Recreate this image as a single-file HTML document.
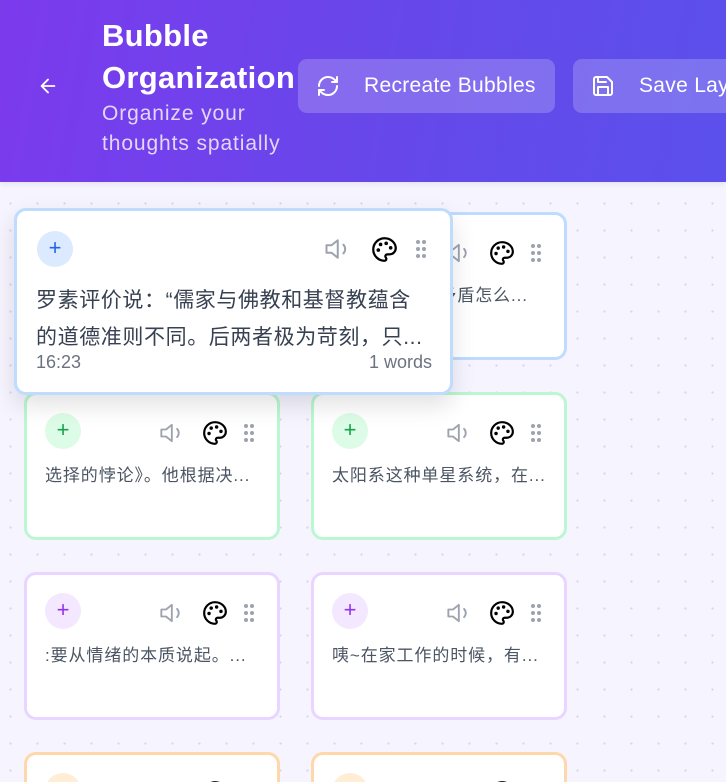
<!DOCTYPE html>
<html><head><meta charset="utf-8"><style>
*{box-sizing:border-box;margin:0;padding:0}
html,body{width:726px;height:782px;overflow:hidden}
body{font-family:"Liberation Sans","Noto Sans CJK SC",sans-serif;background:#f5f3ff;position:relative}
.bg{position:absolute;left:0;top:182px;width:726px;height:600px;background-color:#f6f4fe;background-image:radial-gradient(circle,#d9d3ee 1px,transparent 1.3px);background-size:27px 27px;background-position:-3px 8px}
header{position:absolute;left:0;top:0;width:726px;height:182px;background:linear-gradient(100deg,#7c3aed 0%,#6648ea 55%,#5b50ec 100%);color:#fff;box-shadow:0 2px 6px rgba(0,0,0,.08)}
.title{position:absolute;left:102px;top:15px;font-size:31px;font-weight:bold;line-height:42px;letter-spacing:.3px}
.sub{position:absolute;left:102px;top:99px;font-size:21px;line-height:30px;color:#e3d6fc;letter-spacing:.9px}
.btn{position:absolute;top:59px;height:54px;background:rgba(255,255,255,.2);border-radius:9px;font-size:21px;line-height:54px;color:#fff;letter-spacing:.3px}
.card{position:absolute;background:#fff;border:3px solid;border-radius:12px;width:256px;height:148px}
.plus{position:absolute;width:36px;height:36px;border-radius:50%;text-align:center;line-height:34px;font-size:22px}
.ic{position:absolute}
.txt{position:absolute;left:18px;top:66px;font-size:17px;letter-spacing:.9px;color:#4b5563;white-space:nowrap;width:225px;overflow:hidden}
.big{left:14px;top:208px;width:439px;height:187px;border-color:#bfdbfe;box-shadow:0 10px 24px rgba(0,0,0,.12);z-index:5}
</style></head><body>
<div class="bg"></div>
<header>
<svg style="position:absolute;left:37px;top:75px" width="22" height="22" viewBox="0 0 24 24" fill="none" stroke="#fff" stroke-width="2" stroke-linecap="round" stroke-linejoin="round"><path d="M19 12H5M12 19l-7-7 7-7"/></svg>
<div class="title">Bubble<br>Organization</div>
<div class="sub">Organize your<br>thoughts spatially</div>
<div class="btn" style="left:298px;width:257px"><svg style="position:absolute;left:18px;top:15px" width="24" height="24" viewBox="0 0 24 24" fill="none" stroke="#fff" stroke-width="2" stroke-linecap="round" stroke-linejoin="round"><path d="M3 12a9 9 0 0 1 9-9 9.75 9.75 0 0 1 6.74 2.74L21 8"/><path d="M21 3v5h-5"/><path d="M21 12a9 9 0 0 1-9 9 9.75 9.75 0 0 1-6.74-2.74L3 16"/><path d="M8 16H3v5"/></svg><span style="position:absolute;left:66px">Recreate Bubbles</span></div>
<div class="btn" style="left:573px;width:200px"><svg style="position:absolute;left:18px;top:15px" width="24" height="24" viewBox="0 0 24 24" fill="none" stroke="#fff" stroke-width="2" stroke-linecap="round" stroke-linejoin="round"><path d="M19 21H5a2 2 0 0 1-2-2V5a2 2 0 0 1 2-2h11l5 5v11a2 2 0 0 1-2 2z"/><path d="M17 21v-8H7v8M7 3v5h8"/></svg><span style="position:absolute;left:66px;white-space:nowrap">Save Layout</span></div>
</header>

<div class="card" style="left:311px;top:212px;border-color:#bfdbfe">
<div class="plus" style="left:18px;top:18px;background:#dbeafe;color:#2563eb">+</div>
<svg class="ic" style="left:132px;top:24px" width="28" height="28" viewBox="0 0 24 24" fill="none" stroke="#9ca3af" stroke-width="1.6" stroke-linecap="round" stroke-linejoin="round"><path d="M11 5 6 9H2v6h4l5 4V5z"/><path d="M15.5 8.5a5 5 0 0 1 0 7"/></svg>
<svg class="ic" style="left:175px;top:25px" width="26" height="26" viewBox="0 0 24 24" fill="none" stroke="#000" stroke-width="2" stroke-linecap="round" stroke-linejoin="round"><circle cx="13.5" cy="6.5" r=".6" fill="#000"/><circle cx="17.5" cy="10.5" r=".6" fill="#000"/><circle cx="8.5" cy="7.5" r=".6" fill="#000"/><circle cx="6.5" cy="12.5" r=".6" fill="#000"/><path d="M12 2C6.5 2 2 6.5 2 12s4.5 10 10 10c.93 0 1.65-.75 1.65-1.69 0-.44-.18-.84-.44-1.13-.29-.29-.44-.65-.44-1.13a1.64 1.64 0 0 1 1.67-1.67h2c3.05 0 5.56-2.5 5.56-5.55C21.97 6.01 17.46 2 12 2z"/></svg>
<svg class="ic" style="left:215px;top:28px" width="14" height="20" viewBox="0 0 14 20" fill="#9ca3af"><circle cx="4" cy="3" r="2"/><circle cx="10" cy="3" r="2"/><circle cx="4" cy="10" r="2"/><circle cx="10" cy="10" r="2"/><circle cx="4" cy="17" r="2"/><circle cx="10" cy="17" r="2"/></svg>
<div class="txt">社会中普遍的矛盾怎么...</div></div>

<div class="card" style="left:24px;top:392px;border-color:#bbf7d0">
<div class="plus" style="left:18px;top:18px;background:#dcfce7;color:#16a34a">+</div>
<svg class="ic" style="left:132px;top:24px" width="28" height="28" viewBox="0 0 24 24" fill="none" stroke="#9ca3af" stroke-width="1.6" stroke-linecap="round" stroke-linejoin="round"><path d="M11 5 6 9H2v6h4l5 4V5z"/><path d="M15.5 8.5a5 5 0 0 1 0 7"/></svg>
<svg class="ic" style="left:175px;top:25px" width="26" height="26" viewBox="0 0 24 24" fill="none" stroke="#000" stroke-width="2" stroke-linecap="round" stroke-linejoin="round"><circle cx="13.5" cy="6.5" r=".6" fill="#000"/><circle cx="17.5" cy="10.5" r=".6" fill="#000"/><circle cx="8.5" cy="7.5" r=".6" fill="#000"/><circle cx="6.5" cy="12.5" r=".6" fill="#000"/><path d="M12 2C6.5 2 2 6.5 2 12s4.5 10 10 10c.93 0 1.65-.75 1.65-1.69 0-.44-.18-.84-.44-1.13-.29-.29-.44-.65-.44-1.13a1.64 1.64 0 0 1 1.67-1.67h2c3.05 0 5.56-2.5 5.56-5.55C21.97 6.01 17.46 2 12 2z"/></svg>
<svg class="ic" style="left:215px;top:28px" width="14" height="20" viewBox="0 0 14 20" fill="#9ca3af"><circle cx="4" cy="3" r="2"/><circle cx="10" cy="3" r="2"/><circle cx="4" cy="10" r="2"/><circle cx="10" cy="10" r="2"/><circle cx="4" cy="17" r="2"/><circle cx="10" cy="17" r="2"/></svg>
<div class="txt">选择的悖论》。他根据决...</div></div>

<div class="card" style="left:311px;top:392px;border-color:#bbf7d0">
<div class="plus" style="left:18px;top:18px;background:#dcfce7;color:#16a34a">+</div>
<svg class="ic" style="left:132px;top:24px" width="28" height="28" viewBox="0 0 24 24" fill="none" stroke="#9ca3af" stroke-width="1.6" stroke-linecap="round" stroke-linejoin="round"><path d="M11 5 6 9H2v6h4l5 4V5z"/><path d="M15.5 8.5a5 5 0 0 1 0 7"/></svg>
<svg class="ic" style="left:175px;top:25px" width="26" height="26" viewBox="0 0 24 24" fill="none" stroke="#000" stroke-width="2" stroke-linecap="round" stroke-linejoin="round"><circle cx="13.5" cy="6.5" r=".6" fill="#000"/><circle cx="17.5" cy="10.5" r=".6" fill="#000"/><circle cx="8.5" cy="7.5" r=".6" fill="#000"/><circle cx="6.5" cy="12.5" r=".6" fill="#000"/><path d="M12 2C6.5 2 2 6.5 2 12s4.5 10 10 10c.93 0 1.65-.75 1.65-1.69 0-.44-.18-.84-.44-1.13-.29-.29-.44-.65-.44-1.13a1.64 1.64 0 0 1 1.67-1.67h2c3.05 0 5.56-2.5 5.56-5.55C21.97 6.01 17.46 2 12 2z"/></svg>
<svg class="ic" style="left:215px;top:28px" width="14" height="20" viewBox="0 0 14 20" fill="#9ca3af"><circle cx="4" cy="3" r="2"/><circle cx="10" cy="3" r="2"/><circle cx="4" cy="10" r="2"/><circle cx="10" cy="10" r="2"/><circle cx="4" cy="17" r="2"/><circle cx="10" cy="17" r="2"/></svg>
<div class="txt">太阳系这种单星系统，在...</div></div>

<div class="card" style="left:24px;top:572px;border-color:#e9d5ff">
<div class="plus" style="left:18px;top:18px;background:#f3e8ff;color:#9333ea">+</div>
<svg class="ic" style="left:132px;top:24px" width="28" height="28" viewBox="0 0 24 24" fill="none" stroke="#9ca3af" stroke-width="1.6" stroke-linecap="round" stroke-linejoin="round"><path d="M11 5 6 9H2v6h4l5 4V5z"/><path d="M15.5 8.5a5 5 0 0 1 0 7"/></svg>
<svg class="ic" style="left:175px;top:25px" width="26" height="26" viewBox="0 0 24 24" fill="none" stroke="#000" stroke-width="2" stroke-linecap="round" stroke-linejoin="round"><circle cx="13.5" cy="6.5" r=".6" fill="#000"/><circle cx="17.5" cy="10.5" r=".6" fill="#000"/><circle cx="8.5" cy="7.5" r=".6" fill="#000"/><circle cx="6.5" cy="12.5" r=".6" fill="#000"/><path d="M12 2C6.5 2 2 6.5 2 12s4.5 10 10 10c.93 0 1.65-.75 1.65-1.69 0-.44-.18-.84-.44-1.13-.29-.29-.44-.65-.44-1.13a1.64 1.64 0 0 1 1.67-1.67h2c3.05 0 5.56-2.5 5.56-5.55C21.97 6.01 17.46 2 12 2z"/></svg>
<svg class="ic" style="left:215px;top:28px" width="14" height="20" viewBox="0 0 14 20" fill="#9ca3af"><circle cx="4" cy="3" r="2"/><circle cx="10" cy="3" r="2"/><circle cx="4" cy="10" r="2"/><circle cx="10" cy="10" r="2"/><circle cx="4" cy="17" r="2"/><circle cx="10" cy="17" r="2"/></svg>
<div class="txt">:要从情绪的本质说起。...</div></div>

<div class="card" style="left:311px;top:572px;border-color:#e9d5ff">
<div class="plus" style="left:18px;top:18px;background:#f3e8ff;color:#9333ea">+</div>
<svg class="ic" style="left:132px;top:24px" width="28" height="28" viewBox="0 0 24 24" fill="none" stroke="#9ca3af" stroke-width="1.6" stroke-linecap="round" stroke-linejoin="round"><path d="M11 5 6 9H2v6h4l5 4V5z"/><path d="M15.5 8.5a5 5 0 0 1 0 7"/></svg>
<svg class="ic" style="left:175px;top:25px" width="26" height="26" viewBox="0 0 24 24" fill="none" stroke="#000" stroke-width="2" stroke-linecap="round" stroke-linejoin="round"><circle cx="13.5" cy="6.5" r=".6" fill="#000"/><circle cx="17.5" cy="10.5" r=".6" fill="#000"/><circle cx="8.5" cy="7.5" r=".6" fill="#000"/><circle cx="6.5" cy="12.5" r=".6" fill="#000"/><path d="M12 2C6.5 2 2 6.5 2 12s4.5 10 10 10c.93 0 1.65-.75 1.65-1.69 0-.44-.18-.84-.44-1.13-.29-.29-.44-.65-.44-1.13a1.64 1.64 0 0 1 1.67-1.67h2c3.05 0 5.56-2.5 5.56-5.55C21.97 6.01 17.46 2 12 2z"/></svg>
<svg class="ic" style="left:215px;top:28px" width="14" height="20" viewBox="0 0 14 20" fill="#9ca3af"><circle cx="4" cy="3" r="2"/><circle cx="10" cy="3" r="2"/><circle cx="4" cy="10" r="2"/><circle cx="10" cy="10" r="2"/><circle cx="4" cy="17" r="2"/><circle cx="10" cy="17" r="2"/></svg>
<div class="txt">咦~在家工作的时候，有...</div></div>

<div class="card" style="left:24px;top:752px;border-color:#fed7aa">
<div class="plus" style="left:18px;top:18px;background:#ffedd5;color:#ea580c">+</div>
<svg class="ic" style="left:175px;top:25px" width="26" height="26" viewBox="0 0 24 24" fill="none" stroke="#000" stroke-width="2" stroke-linecap="round" stroke-linejoin="round"><path d="M12 2C6.5 2 2 6.5 2 12s4.5 10 10 10c.93 0 1.65-.75 1.65-1.69 0-.44-.18-.84-.44-1.13-.29-.29-.44-.65-.44-1.13a1.64 1.64 0 0 1 1.67-1.67h2c3.05 0 5.56-2.5 5.56-5.55C21.97 6.01 17.46 2 12 2z"/></svg></div>
<div class="card" style="left:311px;top:752px;border-color:#fed7aa">
<div class="plus" style="left:18px;top:18px;background:#ffedd5;color:#ea580c">+</div>
<svg class="ic" style="left:175px;top:25px" width="26" height="26" viewBox="0 0 24 24" fill="none" stroke="#000" stroke-width="2" stroke-linecap="round" stroke-linejoin="round"><path d="M12 2C6.5 2 2 6.5 2 12s4.5 10 10 10c.93 0 1.65-.75 1.65-1.69 0-.44-.18-.84-.44-1.13-.29-.29-.44-.65-.44-1.13a1.64 1.64 0 0 1 1.67-1.67h2c3.05 0 5.56-2.5 5.56-5.55C21.97 6.01 17.46 2 12 2z"/></svg></div>

<div class="card big">
<div class="plus" style="left:20px;top:20px;background:#dbeafe;color:#2563eb">+</div>
<svg class="ic" style="left:307px;top:23px" width="30" height="30" viewBox="0 0 24 24" fill="none" stroke="#9ca3af" stroke-width="1.6" stroke-linecap="round" stroke-linejoin="round"><path d="M11 5 6 9H2v6h4l5 4V5z"/><path d="M15.5 8.5a5 5 0 0 1 0 7"/></svg>
<svg class="ic" style="left:354px;top:25px" width="27" height="27" viewBox="0 0 24 24" fill="none" stroke="#000" stroke-width="2" stroke-linecap="round" stroke-linejoin="round"><circle cx="13.5" cy="6.5" r=".6" fill="#000"/><circle cx="17.5" cy="10.5" r=".6" fill="#000"/><circle cx="8.5" cy="7.5" r=".6" fill="#000"/><circle cx="6.5" cy="12.5" r=".6" fill="#000"/><path d="M12 2C6.5 2 2 6.5 2 12s4.5 10 10 10c.93 0 1.65-.75 1.65-1.69 0-.44-.18-.84-.44-1.13-.29-.29-.44-.65-.44-1.13a1.64 1.64 0 0 1 1.67-1.67h2c3.05 0 5.56-2.5 5.56-5.55C21.97 6.01 17.46 2 12 2z"/></svg>
<svg class="ic" style="left:397px;top:27px" width="14" height="22" viewBox="0 0 14 20" fill="#9ca3af"><circle cx="4" cy="3" r="2"/><circle cx="10" cy="3" r="2"/><circle cx="4" cy="10" r="2"/><circle cx="10" cy="10" r="2"/><circle cx="4" cy="17" r="2"/><circle cx="10" cy="17" r="2"/></svg>
<div style="position:absolute;left:19px;top:71px;font-size:21px;letter-spacing:.6px;line-height:37px;color:#374151;width:420px">
<div style="white-space:nowrap">罗素评价说：“儒家与佛教和基督教蕴含</div>
<div style="white-space:nowrap">的道德准则不同。后两者极为苛刻，只...</div></div>
<div style="position:absolute;left:19px;top:141px;font-size:18px;color:#6b7280">16:23</div>
<div style="position:absolute;right:18px;top:141px;font-size:18px;color:#6b7280">1 words</div>
</div>
</body></html>
